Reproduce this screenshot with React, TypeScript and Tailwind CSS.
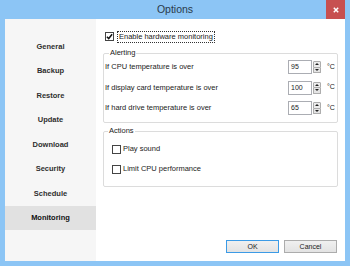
import React from "react";

const navItems = ["General", "Backup", "Restore", "Update", "Download", "Security", "Schedule", "Monitoring"];

const alerts = [
  { label: "If CPU temperature is over", value: "95" },
  { label: "If display card temperature is over", value: "100" },
  { label: "If hard drive temperature is over", value: "65" },
];

function Check({ checked }: { checked?: boolean }) {
  return (
    <span className="w-[9px] h-[9px] border border-[#444] bg-white flex items-center justify-center shrink-0">
      {checked && (
        <svg viewBox="0 0 8 8" className="w-[7px] h-[7px]">
          <path d="M1 4.2 L3.1 6.3 L7 1.4" stroke="#111" strokeWidth="1.7" fill="none" />
        </svg>
      )}
    </span>
  );
}

function Spinner({ value }: { value: string }) {
  return (
    <div className="flex h-[14px]">
      <div className="w-[24px] h-full border border-[#abadb3] bg-white text-[7px] leading-[12px] pl-[2px] text-[#222]">
        {value}
      </div>
      <div className="w-[9px] h-full flex flex-col py-[1px] pl-[1px]">
        <div className="flex-1 border border-[#adadad] rounded-t-[1px] bg-[#ececec] flex items-center justify-center">
          <svg viewBox="0 0 4 2" className="w-[4px] h-[2px]">
            <path d="M0 2 L2 0 L4 2 Z" fill="#222" />
          </svg>
        </div>
        <div className="flex-1 border border-t-0 border-[#adadad] rounded-b-[1px] bg-[#e4e4e4] flex items-center justify-center">
          <svg viewBox="0 0 4 2" className="w-[4px] h-[2px]">
            <path d="M0 0 L4 0 L2 2 Z" fill="#222" />
          </svg>
        </div>
      </div>
    </div>
  );
}

export default function App() {
  return (
    <div className="w-[350px] h-[266px] bg-[#8cc5f5] flex flex-col px-[5px] pb-[5px] font-['Liberation_Sans',Arial,sans-serif] text-[#222] overflow-hidden">
      {/* title bar */}
      <div className="h-[19px] flex items-center shrink-0 relative">
        <div className="flex-1 text-center text-[10.5px] text-[#2a3a4a] pt-[1px]">Options</div>
        <div className="absolute right-0 top-0 w-[19px] h-[19px] bg-[#c75050] flex items-center justify-center">
          <svg viewBox="0 0 6 6" className="w-[6px] h-[6px]">
            <path d="M0.8 0.8 L5.2 5.2 M5.2 0.8 L0.8 5.2" stroke="#fff" strokeWidth="1.5" />
          </svg>
        </div>
      </div>

      <div className="flex-1 flex bg-white">
        {/* sidebar */}
        <div className="w-[91px] bg-[#f6f6f6] pt-[15px] flex flex-col">
          {navItems.map((n) => (
            <div
              key={n}
              className={`h-[24.5px] flex items-center justify-center text-[7.5px] font-bold text-[#2e2e2e] ${
                n === "Monitoring" ? "bg-[#e1e1e1] text-[#111]" : ""
              }`}
            >
              {n}
            </div>
          ))}
        </div>

        {/* content */}
        <div className="flex-1 flex flex-col pt-[12px] pl-[7px] pr-[7px] text-[7.5px]">
          <div className="h-[11px] flex items-center pl-[2px]">
            <Check checked />
            <span className="ml-[3px] border border-dotted border-[#333] px-[1px] leading-[10px]">
              Enable hardware monitoring
            </span>
          </div>

          <fieldset className="mt-[6px] border border-[#dcdcdc] rounded-[2px] pl-[1px] pr-[1px] pb-[7px]">
            <legend className="ml-[4px] px-[1px] leading-[10px]">Alerting</legend>
            <div className="flex flex-col gap-[6.5px] pt-[2px]">
              {alerts.map((a) => (
                <div key={a.label} className="h-[14px] flex items-center">
                  <span className="flex-1">{a.label}</span>
                  <Spinner value={a.value} />
                  <span className="w-[9px] ml-[6px] text-[7px]">°C</span>
                </div>
              ))}
            </div>
          </fieldset>

          <fieldset className="mt-[3px] border border-[#dcdcdc] rounded-[2px] pl-[8px] pb-[11.5px]">
            <legend className="ml-[-4px] px-[1px] leading-[10px]">Actions</legend>
            <div className="flex flex-col gap-[9px] pt-[7.5px]">
              <div className="h-[11px] flex items-center">
                <Check />
                <span className="ml-[2px]">Play sound</span>
              </div>
              <div className="h-[11px] flex items-center">
                <Check />
                <span className="ml-[2px]">Limit CPU performance</span>
              </div>
            </div>
          </fieldset>

          <div className="mt-auto flex justify-end gap-[5px] pb-[8px] pr-[1px]">
            <button className="w-[53px] h-[13px] border border-[#3c9be6] bg-gradient-to-b from-[#f0f0f0] to-[#e3e3e3] text-[7px] leading-[11px] text-[#222]">
              OK
            </button>
            <button className="w-[53px] h-[13px] border border-[#acacac] bg-gradient-to-b from-[#f0f0f0] to-[#e3e3e3] text-[7px] leading-[11px] text-[#222]">
              Cancel
            </button>
          </div>
        </div>
      </div>
    </div>
  );
}
